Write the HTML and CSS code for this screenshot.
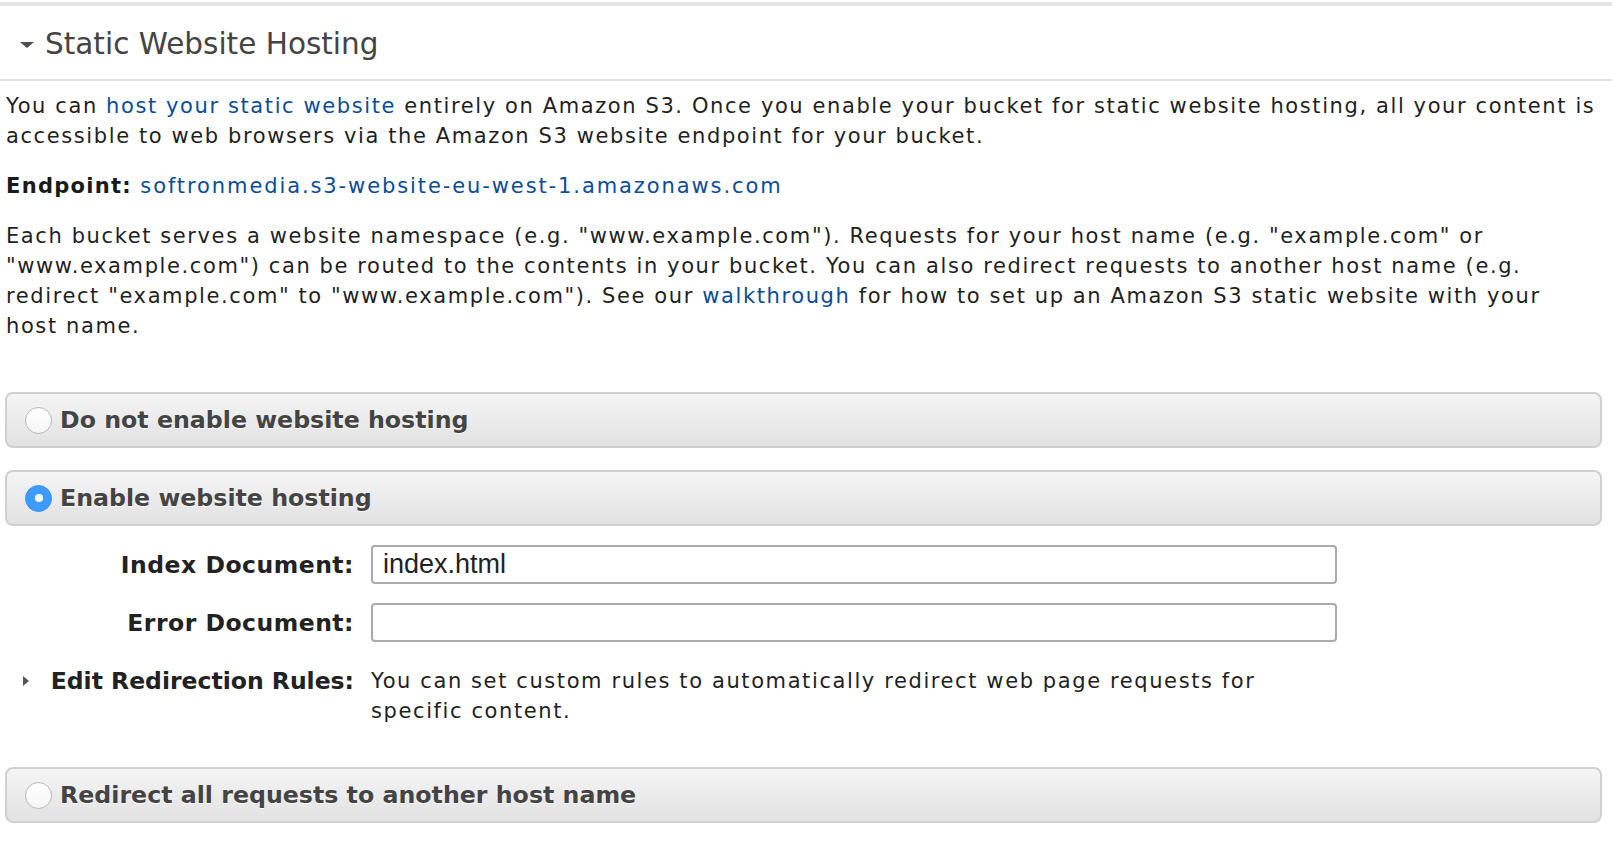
FILE: index.html
```html
<!DOCTYPE html>
<html lang="en">
<head>
<meta charset="utf-8">
<title>Static Website Hosting</title>
<link rel="stylesheet" href="styles.css">
</head>
<body>
<section class="panel">
  <header class="panel-header">
    <span class="caret-down"></span>
    <h2 class="panel-title">Static Website Hosting</h2>
  </header>
  <div class="panel-body">
    <p class="text">You can <a href="#" class="link">host your static website</a> entirely on Amazon S3. Once you enable your bucket for static website hosting, all your content is accessible to web browsers via the Amazon S3 website endpoint for your bucket.</p>
    <p class="text"><strong class="strong">Endpoint:</strong> <a href="#" class="link link-endpoint">softronmedia.s3-website-eu-west-1.amazonaws.com</a></p>
    <p class="text last">Each bucket serves a website namespace (e.g. "www.example.com"). Requests for your host name (e.g. "example.com" or "www.example.com") can be routed to the contents in your bucket. You can also redirect requests to another host name (e.g. redirect "example.com" to "www.example.com"). See our <a href="#" class="link">walkthrough</a> for how to set up an Amazon S3 static website with your host name.</p>

    <div class="options">
      <div class="option">
        <span class="radio"></span>
        <span class="option-label">Do not enable website hosting</span>
      </div>
      <div class="option option-gap">
        <span class="radio radio-checked"><span class="radio-dot"></span></span>
        <span class="option-label">Enable website hosting</span>
      </div>

      <div class="form">
        <label class="form-label">Index Document:</label>
        <input class="form-input" type="text" value="index.html">
        <label class="form-label">Error Document:</label>
        <input class="form-input" type="text" value="">
        <div class="form-label form-label-toggle">
          <span class="caret-right"></span>
          <span class="toggle-text">Edit Redirection Rules:</span>
        </div>
        <div class="form-desc">You can set custom rules to automatically redirect web page requests for specific content.</div>
      </div>

      <div class="option">
        <span class="radio"></span>
        <span class="option-label">Redirect all requests to another host name</span>
      </div>
    </div>
  </div>
</section>
</body>
</html>
```

FILE: styles.css
```css
html, body {
  margin: 0;
  padding: 0;
  background: #ffffff;
}

body {
  padding-top: 2px;
  font-family: "DejaVu Sans", Verdana, sans-serif;
  font-size: 21px;
  letter-spacing: 1.6px;
  line-height: 30px;
  color: #1f1f1f;
}

.panel {
  border-top: 4px solid #e4e4e4;
}

.panel-header {
  display: flex;
  align-items: center;
  height: 70px;
  padding-top: 3px;
  padding-left: 20px;
  border-bottom: 2px solid #e3e3e3;
  letter-spacing: 0;
}

.caret-down {
  width: 0;
  height: 0;
  border-left: 7px solid transparent;
  border-right: 7px solid transparent;
  border-top: 6px solid #505050;
  margin-right: 11px;
  margin-top: 2px;
}

.panel-title {
  margin: 0;
  font-size: 29.5px;
  font-weight: normal;
  color: #444444;
  line-height: 36px;
}

.panel-body {
  padding: 10px 15px 0 6px;
}

.text {
  margin: 0 0 20px 0;
}

.text.last {
  margin-bottom: 51px;
}

.link {
  color: #0b4d96;
  text-decoration: none;
}

.link-endpoint {
  letter-spacing: 1.9px;
}

.strong {
  font-weight: bold;
  color: #1a1a1a;
  letter-spacing: 1.3px;
}

.options {
  margin-left: -1px;
  margin-right: -5px;
  display: flex;
  flex-direction: column;
}

.option {
  display: flex;
  align-items: center;
  height: 52px;
  padding-left: 18px;
  border: 2px solid #d0d0d0;
  border-radius: 8px;
  background: linear-gradient(to bottom, #f5f5f5 0%, #e2e2e2 100%);
  letter-spacing: 0;
}

.option-gap {
  margin-top: 22px;
}

.radio {
  box-sizing: border-box;
  width: 27px;
  height: 27px;
  border-radius: 50%;
  border: 1px solid #b9b9b9;
  background: linear-gradient(to bottom, #ffffff, #f6f6f6);
  margin-right: 8px;
  display: flex;
  align-items: center;
  justify-content: center;
  flex: none;
}

.radio-checked {
  border-color: #3a8ff0;
  background: #3d9bfb;
}

.radio-dot {
  width: 8px;
  height: 8px;
  border-radius: 50%;
  background: #ffffff;
}

.option-label {
  font-weight: bold;
  font-size: 23.7px;
  color: #444444;
  text-shadow: 0 1px 0 #ffffff;
}

.form {
  display: grid;
  grid-template-columns: 349px 966px;
  column-gap: 17px;
  row-gap: 19px;
  align-items: center;
  margin-top: 19px;
  margin-bottom: 41px;
}

.form-label {
  font-weight: bold;
  font-size: 23.5px;
  letter-spacing: 0.5px;
  color: #222222;
  text-align: right;
  text-shadow: 0 1px 0 #ffffff;
}

.form-input {
  box-sizing: border-box;
  height: 39px;
  width: 966px;
  border: 2px solid #ababab;
  border-radius: 4px;
  padding: 0 10px;
  font-family: "Liberation Sans", Arial, sans-serif;
  font-size: 27px;
  letter-spacing: 0;
  color: #222222;
  background: #ffffff;
  outline: none;
}

.form-label-toggle {
  display: flex;
  align-items: center;
  align-self: start;
  margin-top: 5px;
  padding-left: 18px;
}

.toggle-text {
  margin-left: auto;
  letter-spacing: 0;
}

.caret-right {
  width: 0;
  height: 0;
  border-top: 5px solid transparent;
  border-bottom: 5px solid transparent;
  border-left: 6px solid #555555;
}

.form-desc {
  align-self: start;
  margin-top: 5px;
}
```
